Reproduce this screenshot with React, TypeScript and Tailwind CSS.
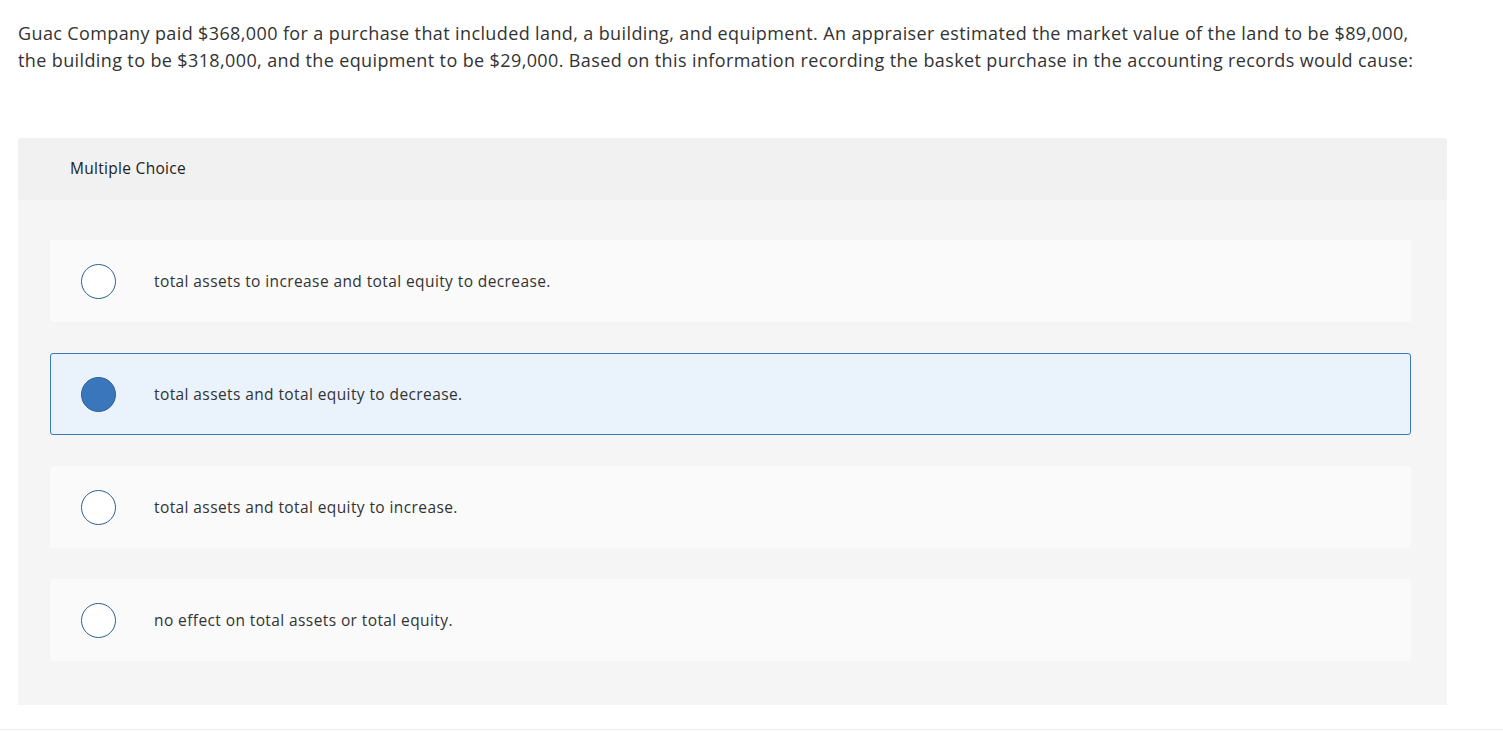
import { useState } from "react";

const CHOICES = [
  "total assets to increase and total equity to decrease.",
  "total assets and total equity to decrease.",
  "total assets and total equity to increase.",
  "no effect on total assets or total equity.",
];

export default function App() {
  const [selected, setSelected] = useState(1);

  return (
    <div
      className="min-h-[732px] bg-white text-[#2b2b2b]"
      style={{ fontFamily: "'Open Sans', 'Noto Sans', sans-serif" }}
    >
      {/* Question */}
      <p className="whitespace-nowrap pl-[18px] pt-[20px] text-[18px] leading-[27px] tracking-[0.38px] text-[#333]">
        Guac Company paid $368,000 for a purchase that included land, a building, and equipment. An appraiser
        estimated the market value of the land to be $89,000,
        <br />
        the building to be $318,000, and the equipment to be $29,000. Based on this information recording the basket
        purchase in the accounting records would cause:
      </p>

      {/* Choices panel */}
      <div className="ml-[18px] mt-[64px] w-[1429px] rounded-t-[3px] bg-[#f5f5f5]">
        <div className="flex h-[62px] items-center rounded-t-[3px] bg-[#f1f1f1] pl-[52px] text-[15.5px] tracking-[0.3px] text-[#222]">
          Multiple Choice
        </div>
        <div className="flex flex-col gap-[31px] px-[32px] pt-[40px] pb-[44px] pr-[36px]">
          {CHOICES.map((text, idx) => {
            const isSel = idx === selected;
            return (
              <button
                key={idx}
                onClick={() => setSelected(idx)}
                className={`flex h-[82px] items-center rounded-[3px] text-left ${
                  isSel ? "border border-[#3b78c0] bg-[#eaf2fb]" : "border border-transparent bg-[#fafafa]"
                }`}
              >
                <span
                  className={`ml-[30px] h-[35px] w-[35px] shrink-0 rounded-full border-[1.5px] border-[#2c5f96] ${
                    isSel ? "bg-[#3a76bb]" : "bg-white"
                  }`}
                />
                <span className="ml-[38px] pt-[2px] text-[15.5px] tracking-[0.4px] text-[#333]">{text}</span>
              </button>
            );
          })}
        </div>
      </div>

      <div className="mt-[24px] h-px bg-[#ececec]" />
    </div>
  );
}
